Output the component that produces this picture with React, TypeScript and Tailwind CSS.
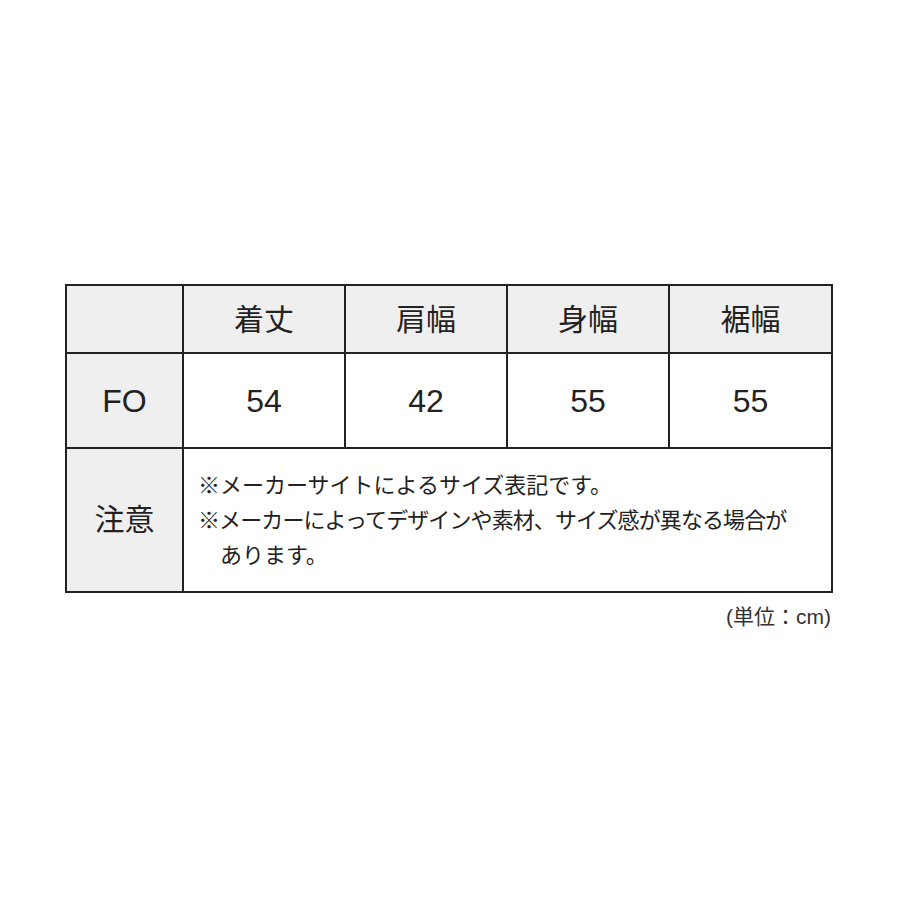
const cols = ["着丈", "肩幅", "身幅", "裾幅"];
const values = ["54", "42", "55", "55"];

export default function App() {
  return (
    <div
      className="min-h-[900px] bg-white text-[#222]"
      style={{ fontFamily: '"Liberation Sans", "Noto Sans CJK JP", sans-serif' }}
    >
      <div className="ml-[65px] w-[766px] pt-[284px]">
        <table className="w-full table-fixed border-collapse">
          <colgroup>
            <col className="w-[117px]" />
            <col className="w-[162px]" />
            <col className="w-[162px]" />
            <col className="w-[162px]" />
            <col className="w-[163px]" />
          </colgroup>
          <tbody>
            <tr className="h-[68px] bg-[#efefef]">
              <td className="border-2 border-[#222]" />
              {cols.map((c) => (
                <td key={c} className="border-2 border-[#222] pt-[2px] text-center text-[30px] leading-none">
                  {c}
                </td>
              ))}
            </tr>
            <tr className="h-[95px]">
              <td className="border-2 border-[#222] bg-[#efefef] text-center text-[32px] leading-none">FO</td>
              {values.map((v, i) => (
                <td key={i} className="border-2 border-[#222] text-center text-[32px] leading-none">
                  {v}
                </td>
              ))}
            </tr>
            <tr className="h-[144px]">
              <td className="border-2 border-[#222] bg-[#efefef] text-center text-[30px] leading-none">注意</td>
              <td colSpan={4} className="border-2 border-[#222] pl-[14px] text-[22px] leading-[35px]">
                <p>※メーカーサイトによるサイズ表記です。</p>
                <p className="tracking-[-0.9px]">※メーカーによってデザインや素材、サイズ感が異なる場合が</p>
                <p className="pl-[22px]">あります。</p>
              </td>
            </tr>
          </tbody>
        </table>
        <p className="mt-[13px] text-right text-[21px] font-normal leading-none text-[#333]">(単位：cm)</p>
      </div>
    </div>
  );
}
